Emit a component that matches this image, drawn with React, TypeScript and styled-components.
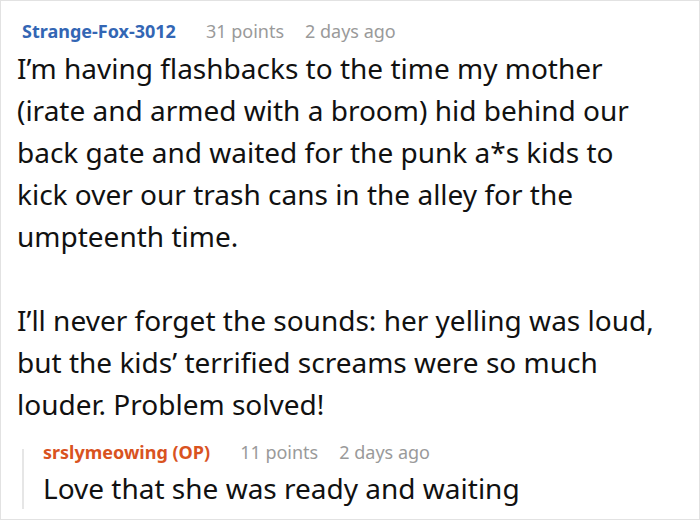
import React from "react";
import styled, { createGlobalStyle } from "styled-components";

const GlobalStyle = createGlobalStyle`
  html, body {
    margin: 0;
    padding: 0;
    background: #ffffff;
  }
  body {
    font-family: "Noto Sans", "Open Sans", sans-serif;
  }
`;

const Card = styled.div`
  box-sizing: border-box;
  width: 700px;
  height: 520px;
  border: 1px solid #e2e2e2;
  background: #ffffff;
  padding: 17px 16px 0 16px;
  overflow: hidden;
`;

const Meta = styled.div<{ $indent?: number }>`
  display: flex;
  align-items: baseline;
  font-size: 18px;
  line-height: 26px;
  padding-left: ${({ $indent }) => $indent ?? 0}px;
`;

const Author = styled.span<{ $op?: boolean }>`
  font-weight: 700;
  color: ${({ $op }) => ($op ? "#d9531f" : "#3366b4")};
  margin-right: 30px;
`;

const Stat = styled.span`
  color: #9a9a9a;
  & + & {
    margin-left: 21px;
  }
`;

const Body = styled.p<{ $top?: number }>`
  margin: ${({ $top }) => $top ?? 0}px 0 0 0;
  font-size: 28px;
  line-height: 42px;
  color: #111111;
  white-space: pre-line;
`;

const Reply = styled.div`
  display: flex;
  gap: 19px;
  margin-top: 14px;
  padding-left: 5px;
`;

const Thread = styled.div`
  width: 2px;
  background: #e6e6e6;
  margin-top: 10px;
`;

const ReplyContent = styled.div`
  display: flex;
  flex-direction: column;
`;

const App = () => (
  <>
    <GlobalStyle />
    <Card>
      <Meta $indent={5}>
        <Author>Strange-Fox-3012</Author>
        <Stat>31 points</Stat>
        <Stat>2 days ago</Stat>
      </Meta>
      <Body $top={3}>
        {"I’m having flashbacks to the time my mother\n(irate and armed with a broom) hid behind our\nback gate and waited for the punk a*s kids to\nkick over our trash cans in the alley for the\numpteenth time.\n\nI’ll never forget the sounds: her yelling was loud,\nbut the kids’ terrified screams were so much\nlouder. Problem solved!"}
      </Body>
      <Reply>
        <Thread />
        <ReplyContent>
          <Meta>
            <Author $op>srslymeowing (OP)</Author>
            <Stat>11 points</Stat>
            <Stat>2 days ago</Stat>
          </Meta>
          <Body $top={2}>Love that she was ready and waiting</Body>
        </ReplyContent>
      </Reply>
    </Card>
  </>
);

export default App;
